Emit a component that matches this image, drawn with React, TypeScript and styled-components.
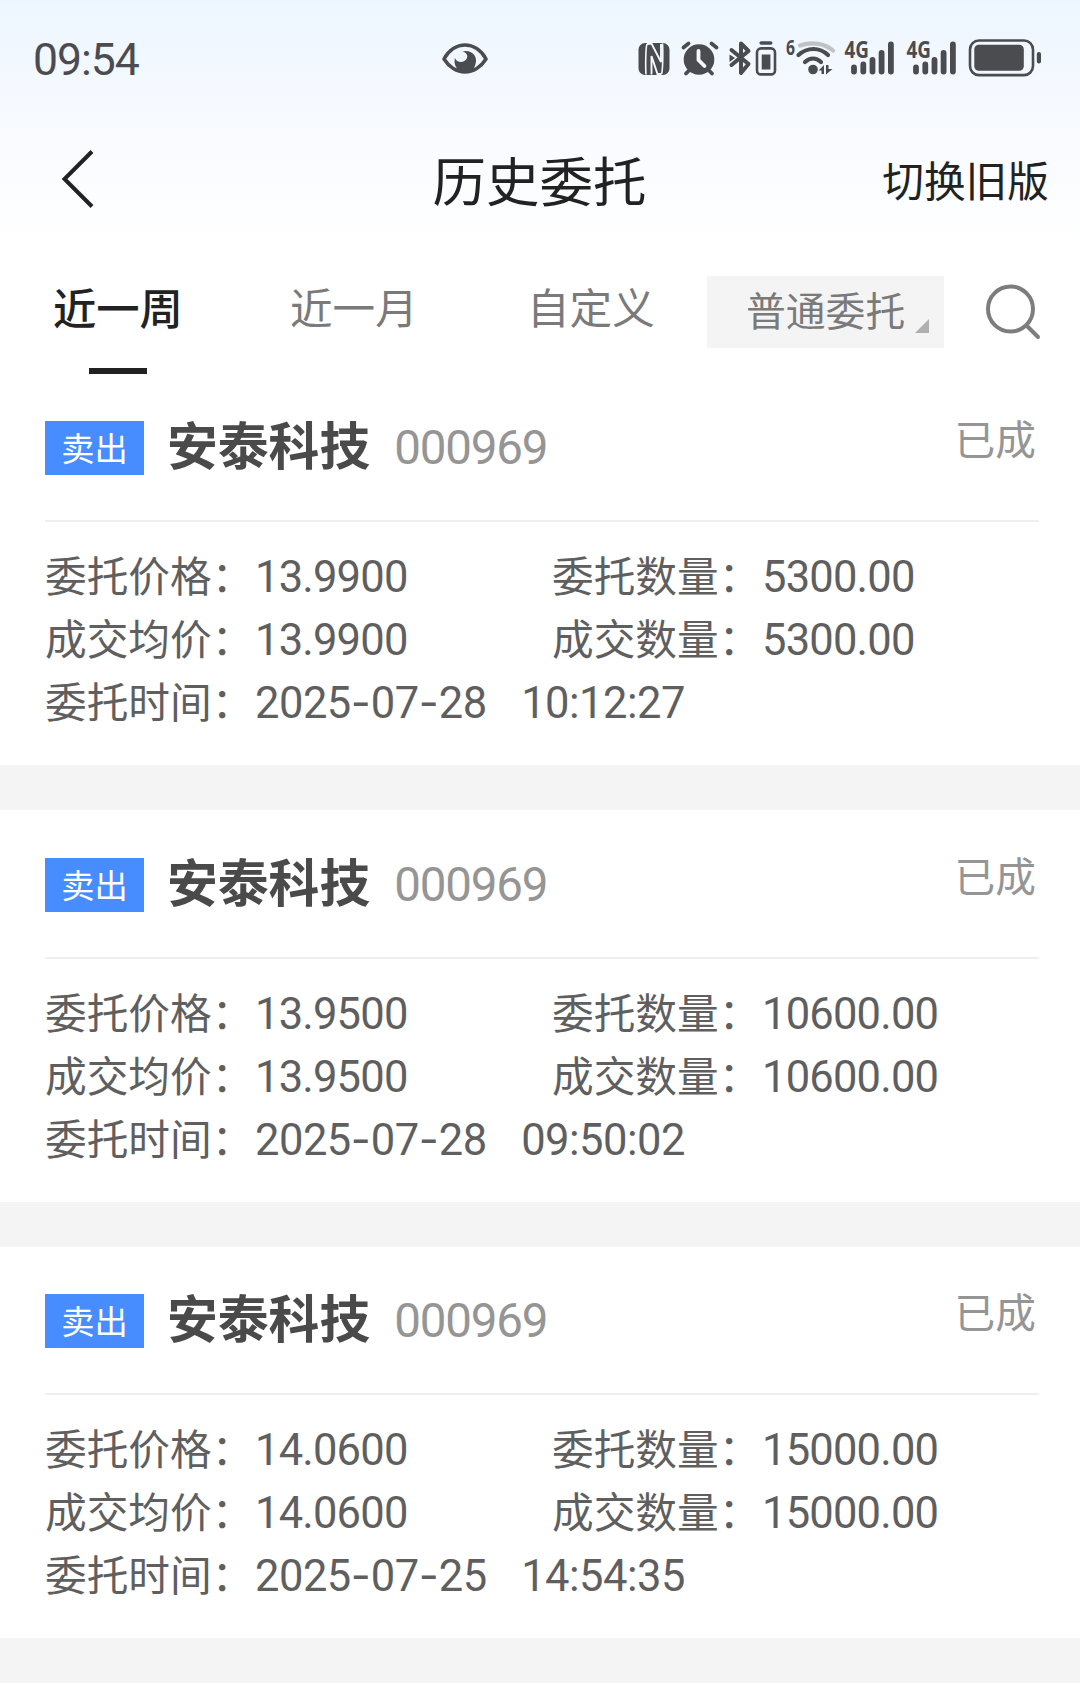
import React from "react";
import styled, { createGlobalStyle } from "styled-components";

const CJK = '"Noto Sans CJK SC", sans-serif';
const DIGITS = 'Roboto, "Noto Sans CJK SC", sans-serif';

const GlobalStyle = createGlobalStyle`
  * { box-sizing: border-box; }
  body { margin: 0; background: #fff; font-family: ${CJK}; }
`;

const Page = styled.div`
  width: 1080px;
  height: 1691px;
  overflow: hidden;
  background: linear-gradient(#edf6ff 0, #f6f9ff 100px, #fff 240px);
  font-family: ${CJK};
`;

const StatusBar = styled.div`
  height: 118px;
  padding: 0 39px 0 33px;
  display: flex;
  align-items: center;
  color: #4a4c4f;
`;

const Clock = styled.span`
  width: 409px;
  padding-top: 2px;
  font: 450 44.5px/52px ${DIGITS};
  letter-spacing: -1px;
`;

const StatusIcons = styled.div`
  margin-left: auto;
  display: flex;
`;

const TitleBar = styled.header`
  height: 124px;
  padding: 0 31px 2px 61px;
  display: grid;
  grid-template-columns: 250px 1fr 250px;
  align-items: center;
  color: #222;
`;

const BackIcon = styled.svg`
  display: block;
`;

const Title = styled.h1`
  margin: -1px 0 0 -31px;
  font-size: 53.5px;
  line-height: 72px;
  font-weight: 400;
  text-align: center;
  white-space: nowrap;
`;

const SwitchLink = styled.span`
  justify-self: end;
  font-size: 41.7px;
  line-height: 60px;
`;

const Filters = styled.nav`
  height: 131.5px;
  padding: 34px 39px 0 53px;
  display: flex;
  align-items: flex-start;
`;

const Tab = styled.div<{ $active?: boolean }>`
  width: 237px;
  height: 98px;
  display: flex;
  flex-direction: column;
  align-items: flex-start;
  justify-content: space-between;
  font-size: ${(p) => (p.$active ? "43.3px" : "42.6px")};
  line-height: 60px;
  font-weight: ${(p) => (p.$active ? 500 : 400)};
  color: ${(p) => (p.$active ? "#222" : "#7a7a7a")};
`;

const Underline = styled.span`
  width: 58px;
  height: 6px;
  margin-left: 36px;
  background: #222;
`;

const TypeSelect = styled.div`
  flex: none;
  width: 237px;
  height: 72px;
  margin-left: -57px;
  padding: 0 15px 15px 39px;
  display: flex;
  align-items: flex-end;
  justify-content: space-between;
  background: #f4f4f4;
  color: #7a7a7a;
  font-size: 39.8px;
  line-height: 60px;
  span { margin-bottom: -6px; white-space: nowrap; }
`;

const Corner = styled.i`
  width: 14px;
  height: 14px;
  background: #b0b0b0;
  clip-path: polygon(100% 0, 100% 100%, 0 100%);
`;

const SearchIcon = styled.svg`
  flex: none;
  margin: 7px 0 0 auto;
`;

const Card = styled.article`
  height: 391.5px;
  padding: 0 41px 0 45px;
  background: #fff;
`;

const Gap = styled.div`
  height: 45px;
  background: #f4f4f4;
`;

const CardHead = styled.div`
  height: 148.5px;
  padding-top: 34.5px;
  display: flex;
  align-items: flex-start;
  border-bottom: 2px solid #efefef;
`;

const Badge = styled.span`
  width: 99px;
  height: 54px;
  margin-top: 13px;
  background: #488dff;
  color: #fff;
  font-size: 33.3px;
  line-height: 52px;
  text-align: center;
`;

const StockName = styled.strong`
  margin: 1px 0 0 23px;
  font-size: 50.8px;
  line-height: 68px;
  font-weight: 700;
  color: #4a4a4a;
`;

const StockCode = styled.span`
  margin: 4px 0 0 24px;
  font: 400 47.5px/72px ${DIGITS};
  letter-spacing: -1.2px;
  color: #959595;
`;

const State = styled.span`
  margin: 3px 3px 0 auto;
  font-size: 40.7px;
  line-height: 54px;
  color: #959595;
`;

const Details = styled.div`
  padding-top: 21px;
  display: grid;
  grid-template-columns: 507px 1fr;
  grid-auto-rows: 63px;
`;

const Field = styled.div<{ $wide?: boolean }>`
  grid-column: ${(p) => (p.$wide ? "1 / -1" : "auto")};
  display: flex;
  align-items: flex-start;
  color: #5f5f5f;
`;

const Label = styled.span`
  width: 210px;
  font-size: 41.7px;
  line-height: 62px;
  white-space: nowrap;
`;

const Value = styled.span<{ $tight?: boolean }>`
  font: 400 43.5px/69px ${DIGITS};
  letter-spacing: ${(p) => (p.$tight ? "-0.8px" : "-0.5px")};
  white-space: nowrap;
`;

const Hyphen = styled.span`
  font-family: Inter, sans-serif;
  line-height: 1;
  letter-spacing: 0;
`;

const Time = styled(Value)`
  margin-left: 34.5px;
`;

type Order = { price: string; quantity: string; date: string; time: string };

const orders: Order[] = [
  { price: "13.9900", quantity: "5300.00", date: "2025-07-28", time: "10:12:27" },
  { price: "13.9500", quantity: "10600.00", date: "2025-07-28", time: "09:50:02" },
  { price: "14.0600", quantity: "15000.00", date: "2025-07-25", time: "14:54:35" },
];

function EyeIcon() {
  return (
    <svg width="46" height="34" viewBox="0 0 46 34">
      <path d="M2 17C7 8 15 3 23 3s16 5 21 14c-5 8-13 13-21 13S7 25 2 17z" fill="none" stroke="currentColor" strokeWidth="3.6" strokeLinejoin="round" />
      <path d="M20 9.500C29 7 34.500 13 34 19.500c-.5 5-3 8-5 10H18c-4-3-6.500-8-5-13.500 1.500 4.500 8.500 5.500 11.500 1 2-3 0-7-4.500-7.500z" fill="currentColor" />
    </svg>
  );
}

function Signal({ x }: { x: number }) {
  return (
    <g transform={`translate(${x} 0)`}>
      <text x="0.5" y="19.500" fontFamily="Open Sans, sans-serif" fontSize="22.500" fontWeight="700" textLength="24.500" lengthAdjust="spacingAndGlyphs">4G</text>
      <g stroke="currentColor" strokeWidth="5.800" strokeLinecap="round">
        <path d="M10 29.500v4M19.300 26.500v7M28.500 22v11.500M37.600 15v18.500M46.900 6.500v27" />
      </g>
    </g>
  );
}

function DeviceIcons() {
  return (
    <svg width="406" height="62" viewBox="0 -10 406 62" fill="currentColor">
      <rect x="3.500" y="5" width="31" height="32" rx="6.500" />
      <path d="M12 6c-1.500 4-1.500 24-1 30.500M26.500 36c1.500-4 1.500-24 1-30.500" fill="none" stroke="#f3f8ff" strokeWidth="1.600" />
      <path d="M12 6l4.500-.5L26 24V6M26.500 36H22.500L16.500 18v18.500" fill="none" stroke="#f3f8ff" strokeWidth="1.900" />
      <circle cx="64" cy="21.500" r="15.300" />
      <path d="M48.500 9.500l5-4M76.500 5.500l5 4M51 35.500l5-5M77 35.500l-5-5" stroke="currentColor" strokeWidth="3.800" strokeLinecap="round" />
      <path d="M63.500 13v9l6 6" fill="none" stroke="#f3f8ff" strokeWidth="3.800" strokeLinecap="round" />
      <path d="M96.500 12l17 14-7.500 9V5.500l7.500 7.500-17 14" fill="none" stroke="currentColor" strokeWidth="4" strokeLinecap="round" strokeLinejoin="round" />
      <path d="M94.500 16.500l5.500 3.500-5.500 4z" />
      <rect x="122" y="10.400" width="18" height="26" rx="4" fill="none" stroke="currentColor" strokeWidth="2.600" />
      <rect x="126.700" y="16.500" width="8.700" height="15" />
      <path d="M126.200 5h9.500" stroke="currentColor" strokeWidth="3.600" strokeLinecap="round" />
      <text x="151" y="17" fontFamily="Open Sans, sans-serif" fontSize="22" fontWeight="700" textLength="9" lengthAdjust="spacingAndGlyphs">6</text>
      <path d="M165 7.500c12-4 25-2 33 5" fill="none" stroke="#bfc2c7" strokeWidth="4.200" strokeLinecap="round" />
      <g fill="none" stroke="currentColor" strokeWidth="4.200" strokeLinecap="round">
        <path d="M163.500 17c9-8 21-8 29.500 0" />
        <path d="M170 24c5-4.500 11-4.500 16 0" />
      </g>
      <circle cx="178" cy="31.500" r="4.800" />
      <path d="M183.500 32.500l5.500-5.500v9h-2.500v-3.500zM197.500 31l-6.500 5.500V27h2.500v4z" />
      <Signal x={209} />
      <Signal x={271} />
      <rect x="335" y="2.500" width="63" height="34.600" rx="9" fill="none" stroke="currentColor" strokeWidth="2.600" />
      <rect x="339.300" y="6.800" width="49.500" height="26" rx="4.500" />
      <rect x="401.800" y="14" width="4.200" height="11.500" rx="2" />
    </svg>
  );
}

function OrderDate({ value }: { value: string }) {
  return (
    <Value>
      {value.split("-").map((part, i) => (
        <React.Fragment key={i}>
          {i > 0 && <Hyphen>-</Hyphen>}
          {part}
        </React.Fragment>
      ))}
    </Value>
  );
}

function OrderCard({ order }: { order: Order }) {
  return (
    <Card>
      <CardHead>
        <Badge>卖出</Badge>
        <StockName>安泰科技</StockName>
        <StockCode>000969</StockCode>
        <State>已成</State>
      </CardHead>
      <Details>
        <Field><Label>委托价格：</Label><Value $tight>{order.price}</Value></Field>
        <Field><Label>委托数量：</Label><Value $tight>{order.quantity}</Value></Field>
        <Field><Label>成交均价：</Label><Value $tight>{order.price}</Value></Field>
        <Field><Label>成交数量：</Label><Value $tight>{order.quantity}</Value></Field>
        <Field $wide>
          <Label>委托时间：</Label>
          <OrderDate value={order.date} />
          <Time>{order.time}</Time>
        </Field>
      </Details>
    </Card>
  );
}

export default function App() {
  return (
    <Page>
      <GlobalStyle />
      <StatusBar>
        <Clock>09:54</Clock>
        <EyeIcon />
        <StatusIcons><DeviceIcons /></StatusIcons>
      </StatusBar>
      <TitleBar>
        <BackIcon width="34" height="58" viewBox="0 0 34 58" fill="none" stroke="currentColor" strokeWidth="4">
          <path d="M31 1.500L3.500 29 31 56.500" />
        </BackIcon>
        <Title>历史委托</Title>
        <SwitchLink>切换旧版</SwitchLink>
      </TitleBar>
      <Filters>
        <Tab $active>近一周<Underline /></Tab>
        <Tab>近一月</Tab>
        <Tab>自定义</Tab>
        <TypeSelect><span>普通委托</span><Corner /></TypeSelect>
        <SearchIcon width="56" height="58" viewBox="0 0 56 58" fill="none" stroke="#7d7d7d" strokeWidth="4" strokeLinecap="round">
          <circle cx="25.500" cy="26" r="22.500" />
          <path d="M42 43l11 11" />
        </SearchIcon>
      </Filters>
      {orders.map((order) => (
        <React.Fragment key={order.time}>
          <OrderCard order={order} />
          <Gap />
        </React.Fragment>
      ))}
    </Page>
  );
}
